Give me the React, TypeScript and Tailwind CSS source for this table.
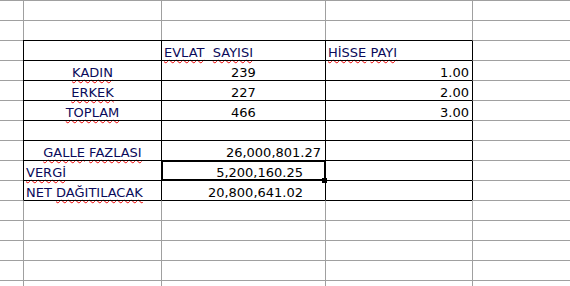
import React from "react";

type Cell = {
	text?: string;
	words?: { t: string; bad?: boolean }[];
	align?: "left" | "center" | "right";
	pr?: string;
	label?: boolean;
};

// rows 2..9 hold the bordered table, columns 1..3
const tableRows: Cell[][] = [
	[
		{},
		{ words: [{ t: "EVLAT", bad: true }, { t: "\u00a0\u00a0" }, { t: "SAYISI", bad: true }], align: "left", label: true },
		{ words: [{ t: "HİSSE", bad: true }, { t: " " }, { t: "PAYI", bad: true }], align: "left", label: true },
	],
	[
		{ words: [{ t: "KADIN", bad: true }], align: "center", label: true },
		{ text: "239", align: "center" },
		{ text: "1.00", align: "right", pr: "pr-[3px]" },
	],
	[
		{ words: [{ t: "ERKEK", bad: true }], align: "center", label: true },
		{ text: "227", align: "center" },
		{ text: "2.00", align: "right", pr: "pr-[3px]" },
	],
	[
		{ words: [{ t: "TOPLAM", bad: true }], align: "center", label: true },
		{ text: "466", align: "center" },
		{ text: "3.00", align: "right", pr: "pr-[3px]" },
	],
	[{}, {}, {}],
	[
		{ words: [{ t: "GALLE", bad: true }, { t: " " }, { t: "FAZLASI", bad: true }], align: "center", label: true },
		{ text: "26,000,801.27", align: "right", pr: "pr-[4px]" },
		{},
	],
	[
		{ words: [{ t: "VERGİ", bad: true }], align: "left", label: true },
		{ text: "5,200,160.25", align: "right", pr: "pr-[22px]" },
		{},
	],
	[
		{ words: [{ t: "NET" }, { t: " " }, { t: "DAĞITILACAK", bad: true }], align: "left", label: true },
		{ text: "20,800,641.02", align: "right", pr: "pr-[22px]" },
		{},
	],
];

const ROWS = 15;

const alignClass = {
	left: "text-left pl-[2px]",
	center: "text-center",
	right: "text-right",
};

const CellBody = ({ cell }: { cell: Cell }) => {
	if (!cell.text && !cell.words) return null;
	const color = cell.label ? "text-[#0a0a5a]" : "text-black";
	return (
		<div
			className={`whitespace-pre pt-[2px] leading-[19px] ${alignClass[cell.align || "left"]} ${cell.pr || ""} ${color}`}
		>
			{cell.text}
			{cell.words?.map((w, i) => (
				<span
					key={i}
					className={
						w.bad
							? "underline decoration-wavy decoration-[#ee0000] decoration-1 underline-offset-[2px]"
							: ""
					}
				>
					{w.t}
				</span>
			))}
		</div>
	);
};

export default function App() {
	const cells: React.ReactNode[] = [];
	for (let r = 0; r < ROWS; r++) {
		for (let c = 0; c < 5; c++) {
			const inTable = r >= 2 && r <= 9 && c >= 1 && c <= 3;
			const topBlack = (r >= 2 && r <= 10) && c >= 1 && c <= 3;
			const leftBlack = r >= 2 && r <= 9 && c >= 1 && c <= 4;
			const content = inTable ? tableRows[r - 2][c - 1] : null;
			cells.push(
				<div
					key={`${r}-${c}`}
					className={`relative border-t ${
						topBlack ? "border-t-black" : "border-t-[#a0a0a0]"
					} ${
						c > 0
							? leftBlack
								? "border-l border-l-black"
								: "border-l border-l-[#a0a0a0]"
							: ""
					}`}
				>
					{content && <CellBody cell={content} />}
				</div>
			);
		}
	}

	return (
		<div
			className="relative w-[570px] h-[286px] overflow-hidden bg-white text-[13px]"
			style={{ fontFamily: '"DejaVu Sans", sans-serif' }}
		>
			<div className="grid grid-cols-[23px_138px_164px_147px_98px] auto-rows-[20px]">
				{cells}
			</div>
			{/* selected cell cursor */}
			<div className="absolute left-[161px] top-[160px] w-[165px] h-[21px] border-2 border-black pointer-events-none" />
			<div className="absolute left-[322px] top-[178px] w-[5px] h-[5px] bg-black" />
		</div>
	);
}
